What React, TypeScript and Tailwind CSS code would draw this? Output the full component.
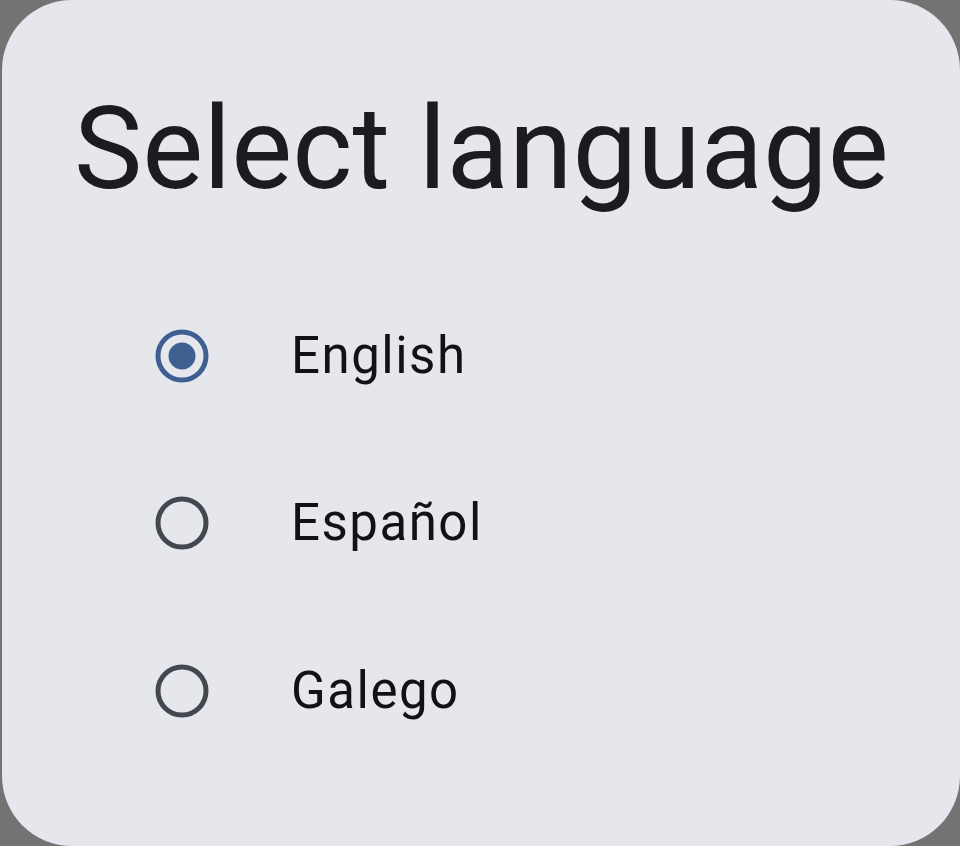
import { useState } from "react"

const languages = ["English", "Español", "Galego"]

function Radio({ checked }: { checked: boolean }) {
  return (
    <svg width="54" height="54" viewBox="0 0 54 54" className="shrink-0">
      <circle
        cx="27"
        cy="27"
        r="24"
        fill="none"
        stroke={checked ? "#3f5f91" : "#44474e"}
        strokeWidth="5"
      />
      {checked && <circle cx="27" cy="27" r="13.5" fill="#3f5f91" />}
    </svg>
  )
}

export default function App() {
  const [selected, setSelected] = useState("English")

  return (
    <div className="w-[960px] h-[846px] bg-[#737373] pl-[2px] overflow-hidden">
      <div
        className="h-full w-full rounded-[70px] bg-[#e6e7ec] flex flex-col"
        style={{ fontFamily: "Roboto, 'Noto Sans', sans-serif" }}
      >
        <h1 className="mt-[91px] pl-[72px] text-[115px] leading-[115px] font-normal text-[#1b1c20] whitespace-nowrap">
          Select language
        </h1>

        <div className="mt-[66px] flex flex-col">
          {languages.map((lang) => (
            <button
              key={lang}
              onClick={() => setSelected(lang)}
              className="h-[167.5px] flex items-center pl-[153px] text-left"
            >
              <Radio checked={selected === lang} />
              <span className="ml-[82px] text-[51px] tracking-[1.5px] text-[#111216]">
                {lang}
              </span>
            </button>
          ))}
        </div>
      </div>
    </div>
  )
}
